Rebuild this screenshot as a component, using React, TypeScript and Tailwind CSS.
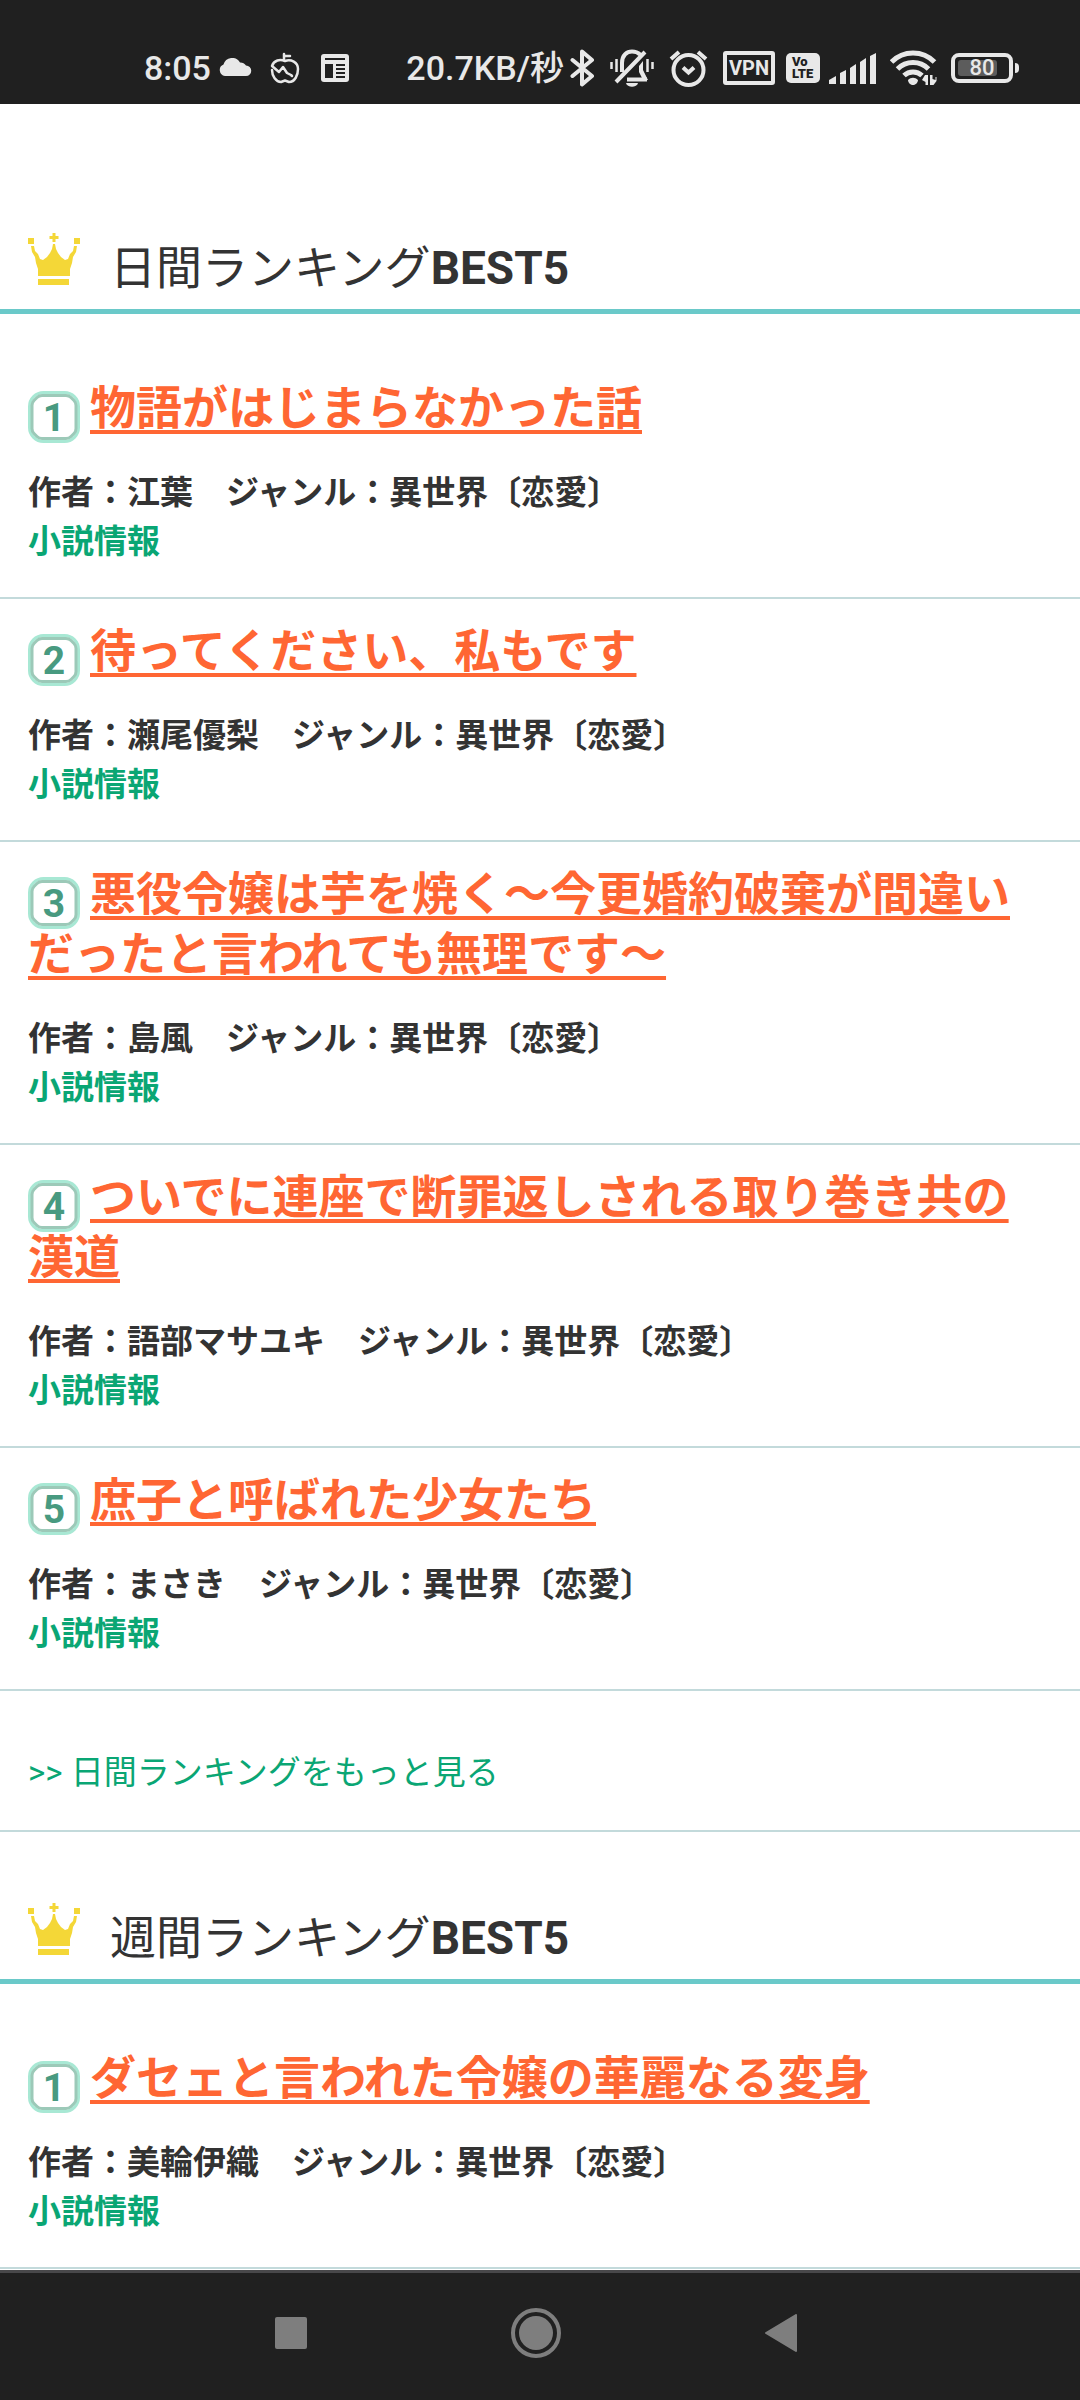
import React from "react";

type Novel = { title: string; author: string };

const daily: Novel[] = [
  { title: "物語がはじまらなかった話", author: "江葉" },
  { title: "待ってください、私もです", author: "瀬尾優梨" },
  { title: "悪役令嬢は芋を焼く〜今更婚約破棄が間違いだったと言われても無理です〜", author: "島風" },
  { title: "ついでに連座で断罪返しされる取り巻き共の漢道", author: "語部マサユキ" },
  { title: "庶子と呼ばれた少女たち", author: "まさき" },
];

const weekly: Novel[] = [{ title: "ダセェと言われた令嬢の華麗なる変身", author: "美輪伊織" }];

function Crown() {
  return (
    <svg className="size-[52px] shrink-0" viewBox="0 0 52 52" fill="#f4d737" aria-hidden="true">
      <path d="M24.500 0h3v3h3v3h-3v3h-3V6h-3V3h3zM0 5h6v6H0zM46 5h6v6h-6z" />
      <path d="M3 13h3l1 5 3 3 2 5 3 1 4-3 3-4 2-4 1-5h2l1 5 2 4 3 4 4 3 3-1 2-5 3-3 1-5h3l-1 6-3 5-1 6-2 6v7H10v-7l-2-6-1-6-3-5z" />
      <path d="M10 46h31v6H10z" />
    </svg>
  );
}

function RankBadge({ rank }: { rank: number }) {
  return (
    <svg className="-mt-2 mr-[10px] -mb-2 inline-block size-[52px] align-[-11px]" viewBox="0 0 52 52" role="img" aria-label={`${rank}位`}>
      <rect x="1.500" y="1.500" width="49" height="49" rx="14" fill="#fff" stroke="#a8e8d4" strokeWidth="3" />
      <path d="M14 4.500h24q3 0 5 2l3 3q2 2 2 5v23q0 3-2 5l-3 3q-2 2-5 2H14q-3 0-5-2l-3-3q-2-2-2-5v-23q0-3 2-5l3-3q2-2 5-2z" fill="none" stroke="#9cc9b8" strokeWidth="3" />
      <text x="26" y="40" textAnchor="middle" fontSize="39" fontWeight="700" fill="#489a80" className="font-[Roboto,sans-serif]">
        {rank}
      </text>
    </svg>
  );
}

function Heading({ label }: { label: string }) {
  return (
    <h2 className="flex items-end border-b-[5px] border-[#6ac9c9] px-7 pb-[11px] text-[46px] leading-[60px] font-normal">
      <span className="mr-[30px] pb-[13px]">
        <Crown />
      </span>
      <span>
        {label}
        <b>BEST5</b>
      </span>
    </h2>
  );
}

function RankList({ items }: { items: Novel[] }) {
  return (
    <ol className="pt-[42px]">
      {items.map((n, i) => (
        <li key={n.title} className="border-b-2 border-[#c3dadb] px-7 pt-[22px] pb-[31px] font-bold">
          <h3 className="text-[46px] leading-[60px]">
            <RankBadge rank={i + 1} />
            <a href="#novel" className="text-[#ff6633] underline decoration-4 underline-offset-[6px] [text-decoration-skip-ink:none]">
              {n.title}
            </a>
          </h3>
          <p className="mt-[30px] text-[33px] leading-[49px]">
            作者：{n.author}　ジャンル：異世界〔恋愛〕
            <br />
            <a href="#info" className="text-[#0aa674]">
              小説情報
            </a>
          </p>
        </li>
      ))}
    </ol>
  );
}

function StatusBar() {
  return (
    <header className="flex h-[104px] items-end justify-between bg-[#202020] pr-[61px] pb-[14px] pl-[144px] font-[Roboto,'Noto_Sans_CJK_JP',sans-serif] text-[34px] leading-[44px] font-medium text-[#e8e8e8]">
      <div className="flex items-center">
        <time>8:05</time>
        <svg className="ml-[7px] h-[20px] w-[34px]" viewBox="0 0 34 20" fill="currentColor" aria-label="天気">
          <path d="M7 18a6 6 0 0 1-1.500-11.500 9 9 0 0 1 16.500-2 7 7 0 0 1 6 3 5.200 5.200 0 0 1 0 10.500z" />
        </svg>
        <svg className="ml-[17px] h-[34px] w-[32px]" viewBox="0 0 32 34" fill="none" stroke="currentColor" strokeWidth="2.500" strokeLinecap="round" strokeLinejoin="round" aria-label="アプリ">
          <path d="M15 9V3M16 5h5" />
          <path d="M3 19c0 6 4 12 9 12l4-1.500 4 1.500c6 0 9-7 9-13 0-7-7-10-13-8-5-2-11-1-13 5l7 6 4-5 4 6 4 2 1 1" />
        </svg>
        <svg className="ml-5 size-[28px]" viewBox="0 0 28 28" aria-label="ニュース">
          <rect width="28" height="28" rx="3" fill="currentColor" />
          <path d="M4 10h8v14H4z" fill="#202020" />
          <path d="M4 5h20M15 11h9M15 15h9M15 19h9M15 23h9" stroke="#202020" strokeWidth="2" />
        </svg>
      </div>
      <div className="flex items-center">
        <span>20.7KB/秒</span>
        <svg className="ml-[6px] h-[38px] w-[25px]" viewBox="0 0 25 38" fill="none" stroke="currentColor" strokeWidth="4" strokeLinejoin="round" strokeLinecap="round" aria-label="Bluetooth">
          <path d="M2.500 11L22 27l-10 8.500v-33L22 11 2.500 27" />
        </svg>
        <svg className="ml-[15px] h-[38px] w-[44px]" viewBox="0 0 44 38" fill="none" stroke="currentColor" strokeWidth="4" aria-label="サイレント">
          <path d="M12 23v-9C12 6 17 2.500 22 2.500c4 0 6 1 8 3M17 30.500h20M35 3L6 33" />
          <path d="M33 12v9l5 10h-5l-4-8v-6z" fill="currentColor" stroke="none" />
          <path d="M1.500 13v7M6.500 10v13M37.500 10v13M42.500 13v7" strokeWidth="2.500" />
          <path d="M16 34h12c-1 5-11 5-12 0z" fill="currentColor" stroke="none" />
        </svg>
        <svg className="ml-[15px] h-[38px] w-[39px]" viewBox="0 0 39 38" fill="none" stroke="currentColor" strokeWidth="4" aria-label="アラーム">
          <circle cx="19.500" cy="21" r="15" />
          <path d="M2 10l8-7M37 10l-8-7M14 18.500l5.500 5 5.500-5" />
        </svg>
        <span className="ml-[15px] flex h-[34px] w-[52px] items-center justify-center rounded-[3px] border-4 border-current text-[20px] leading-[26px] font-bold">VPN</span>
        <span className="ml-[11px] flex h-[30px] w-[34px] flex-col justify-center rounded-[5px] bg-[#e8e8e8] pl-[6px] text-[13px] leading-[12px] font-black text-[#202020]">
          <span>Vo</span>
          <span>LTE</span>
        </span>
        <svg className="ml-[9px] h-[31px] w-[48px]" viewBox="0 0 48 31" fill="currentColor" aria-label="電波">
          <path d="M0 31v-4l7-4v8zM11 31V20l6-3v14zM21 31V15l6-4v20zM31 31V9l6-4v26zM41 31V3l6-3v31z" />
        </svg>
        <svg className="ml-[13px] h-[36px] w-[47px]" viewBox="0 0 47 36" fill="none" stroke="currentColor" strokeWidth="5" aria-label="Wi-Fi">
          <path d="M1.500 12A30 30 0 0 1 44.500 12M7.500 19A22 22 0 0 1 38.500 19M14 25.500A13 13 0 0 1 32 25.500" />
          <path d="M18 30c3-3 7-3 10 0 0 3-3 5-5 5s-5-2-5-5zM35 25h3v10h-2.500v-3L32 30zM40 35V25h2.500v4l3 1v-3h1v4l-3 4z" fill="currentColor" stroke="none" />
        </svg>
        <span className="relative ml-[14px] flex h-[30px] w-[62px] rounded-[8px] border-4 border-current p-[3px]">
          <span className="h-full w-[39px] rounded-[3px] bg-[#5c5c5c]" />
          <span className="absolute inset-0 flex items-center justify-center text-[22px] leading-[22px]">80</span>
        </span>
        <span className="ml-0.5 h-[10px] w-1 rounded-r bg-current" />
      </div>
    </header>
  );
}

function NavBar() {
  return (
    <nav className="mt-px grid h-[130px] grid-cols-3 items-center justify-items-center border-t-[3px] border-[#48484a] bg-[#202020] pr-[177px] pb-2 pl-[169px]">
      <button type="button" aria-label="履歴" className="size-[32px] rounded-[2px] bg-[#7e7e7e]" />
      <button type="button" aria-label="ホーム" className="flex size-[50px] items-center justify-center rounded-full border-4 border-[#7e7e7e]">
        <span className="size-[34px] shrink-0 rounded-full bg-[#7e7e7e]" />
      </button>
      <button type="button" aria-label="戻る">
        <svg className="h-[38px] w-[32px]" viewBox="0 0 32 38" fill="#7e7e7e" stroke="#7e7e7e" strokeWidth="2" strokeLinejoin="round" aria-hidden="true">
          <path d="M1 19L31 1v36z" />
        </svg>
      </button>
    </nav>
  );
}

export default function App() {
  return (
    <div className="bg-white font-[Roboto,'Noto_Sans_CJK_JP',sans-serif] text-[#333333]">
      <StatusBar />
      <main>
        <section className="pt-[129px]">
          <Heading label="日間ランキング" />
          <RankList items={daily} />
          <p className="border-b-2 border-[#c3dadb] px-7 pt-[57px] pb-[33px] text-[33px] leading-[49px]">
            <a href="#daily" className="text-[#0aa674]">
              &gt;&gt; 日間ランキングをもっと見る
            </a>
          </p>
        </section>
        <section className="pt-[71px]">
          <Heading label="週間ランキング" />
          <RankList items={weekly} />
        </section>
      </main>
      <NavBar />
    </div>
  );
}
